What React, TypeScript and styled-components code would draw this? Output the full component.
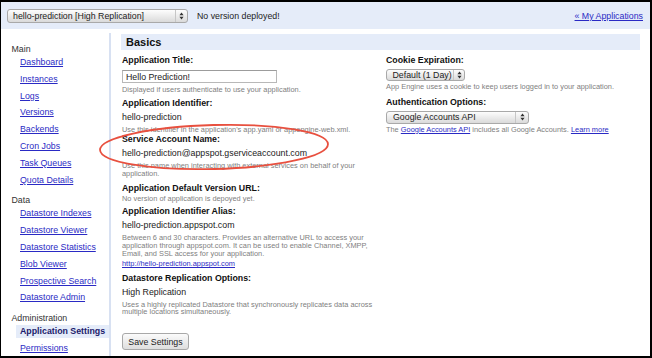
import styled, { createGlobalStyle } from "styled-components"

const GlobalStyle = createGlobalStyle`
  body {
    margin: 0;
    background: #fff;
    font-family: "Liberation Sans", Arial, sans-serif;
  }
`

const LINK = "#2a2ac4"

const Frame = styled.div`
  position: relative;
  box-sizing: border-box;
  width: 652px;
  height: 358px;
  border: 2px solid #000;
  border-left-width: 1px;
  overflow: hidden;
  color: #222;
`

const TopBar = styled.div`
  height: 27px;
  background: #e5ecf9;
  display: flex;
  align-items: center;
  padding: 0 7px 0 6px;
  font-size: 8.8px;
`

const SelectBox = styled.div<{ $width: number; $height: number }>`
  box-sizing: border-box;
  width: ${p => p.$width}px;
  height: ${p => p.$height}px;
  display: flex;
  align-items: center;
  border: 1px solid #a9a9a9;
  border-radius: 3px;
  background: linear-gradient(#fdfdfd, #dadada);
  font-size: 8.8px;
  color: #222;
`

const SelectText = styled.span<{ $pad: number }>`
  flex: 1;
  padding-left: ${p => p.$pad}px;
  white-space: nowrap;
  overflow: hidden;
`

const SelectArrow = styled.span<{ $w: number }>`
  width: ${p => p.$w}px;
  align-self: stretch;
  border-left: 1px solid #c6c6c6;
  display: flex;
  align-items: center;
  justify-content: center;
`

const FieldSelect = styled(SelectBox)`
  margin-top: 2.6px;
`

const NoVersion = styled.span`
  margin-left: 9px;
`

const MyApps = styled.a`
  margin-left: auto;
  color: ${LINK};
  text-decoration: underline;
`

const Body = styled.div`
  display: flex;
  margin-top: 4px;
  height: 323px;
`

const Sidebar = styled.div`
  flex-shrink: 0;
  width: 108px;
  border-right: 2px solid #d8e1f2;
  padding-top: 11px;
  font-size: 8.8px;
`

const NavSection = styled.div`
  & + & {
    margin-top: 7px;
  }
`

const NavTitle = styled.div`
  line-height: 10px;
  padding-left: 10.5px;
  color: #333;
`

const NavLink = styled.a<{ $active?: boolean }>`
  display: block;
  line-height: 16.8px;
  padding-left: 19px;
  color: ${LINK};
  text-decoration: underline;
  white-space: nowrap;

  ${p =>
    p.$active &&
    `
    line-height: 13px;
    margin: 2px 0 2px 15px;
    padding-left: 4px;
    background: #e5ecf9;
    font-weight: bold;
    color: #1b1b6b;
    text-decoration: none;
  `}
`

const Main = styled.div`
  flex: 1;
  padding: 1px 10px 0 10px;
`

const Header = styled.div`
  height: 16px;
  line-height: 16px;
  background: #e5ecf9;
  padding-left: 5px;
  font-size: 11px;
  font-weight: bold;
  color: #111;
`

const Columns = styled.div`
  display: grid;
  grid-template-columns: 264px 1fr;
  margin-top: 5.2px;
  padding-left: 1px;
`

const Column = styled.div`
  display: flex;
  flex-direction: column;
  align-items: flex-start;
`

const Field = styled.div<{ $gap?: number }>`
  margin-top: ${p => p.$gap ?? 0}px;
`

const Label = styled.div`
  font-size: 8.8px;
  line-height: 11px;
  font-weight: bold;
  color: #111;
`

const Value = styled.div`
  font-size: 8.8px;
  line-height: 11px;
  margin-top: 3px;
  color: #222;
`

const Help = styled.div`
  font-size: 7.4px;
  line-height: 7.7px;
  margin-top: 3px;
  color: #808080;
  white-space: nowrap;

  ${Label} + & {
    margin-top: 1px;
  }
  ${FieldSelect} + & {
    margin-top: 1.9px;
  }
`

const HelpLink = styled.a`
  display: block;
  font-size: 7.4px;
  line-height: 7.7px;
  margin-top: 2.8px;
  color: ${LINK};
  text-decoration: underline;
`

const InlineLink = styled.a`
  color: ${LINK};
  text-decoration: underline;
`

const TextInput = styled.input`
  box-sizing: border-box;
  display: block;
  width: 155px;
  height: 13.3px;
  margin: 4px 0 0;
  padding: 0 0 0 3px;
  border: 1px solid #b8b8b8;
  border-top-color: #9c9c9c;
  font: 8.8px "Liberation Sans", Arial, sans-serif;
  color: #222;
  background: #fff;
  outline: none;
`

const SaveButton = styled.button`
  box-sizing: border-box;
  width: 67px;
  height: 17px;
  margin-top: 17px;
  padding: 0;
  border: 1px solid #a8a8a8;
  border-radius: 3px;
  background: linear-gradient(#fbfbfb, #dedede);
  font: 8.8px "Liberation Sans", Arial, sans-serif;
  color: #222;
`

const Annotation = styled.svg`
  position: absolute;
  left: 0;
  top: 0;
  pointer-events: none;
`

function UpDown() {
  return (
    <svg width="5" height="8" viewBox="0 0 5 8">
      <path d="M0.4 3.3 L2.5 0.4 L4.6 3.3 Z M0.4 4.7 L2.5 7.6 L4.6 4.7 Z" fill="#333" />
    </svg>
  )
}

const mainLinks = ["Dashboard", "Instances", "Logs", "Versions", "Backends", "Cron Jobs", "Task Queues", "Quota Details"]
const dataLinks = ["Datastore Indexes", "Datastore Viewer", "Datastore Statistics", "Blob Viewer", "Prospective Search", "Datastore Admin"]

export default function App() {
  return (
    <Frame>
      <GlobalStyle />
      <TopBar>
        <SelectBox $width={181} $height={14}>
          <SelectText $pad={5}>hello-prediction [High Replication]</SelectText>
          <SelectArrow $w={11}><UpDown /></SelectArrow>
        </SelectBox>
        <NoVersion>No version deployed!</NoVersion>
        <MyApps>« My Applications</MyApps>
      </TopBar>
      <Body>
        <Sidebar>
          <NavSection>
            <NavTitle>Main</NavTitle>
            {mainLinks.map(l => <NavLink key={l}>{l}</NavLink>)}
          </NavSection>
          <NavSection>
            <NavTitle>Data</NavTitle>
            {dataLinks.map(l => <NavLink key={l}>{l}</NavLink>)}
          </NavSection>
          <NavSection>
            <NavTitle>Administration</NavTitle>
            <NavLink $active>Application Settings</NavLink>
            <NavLink>Permissions</NavLink>
          </NavSection>
        </Sidebar>
        <Main>
          <Header>Basics</Header>
          <Columns>
            <Column>
              <Field>
                <Label>Application Title:</Label>
                <TextInput value="Hello Prediction!" readOnly />
                <Help>Displayed if users authenticate to use your application.</Help>
              </Field>
              <Field $gap={3.6}>
                <Label>Application Identifier:</Label>
                <Value>hello-prediction</Value>
                <Help>Use this identifier in the application's app.yaml or appengine-web.xml.</Help>
              </Field>
              <Field $gap={1}>
                <Label>Service Account Name:</Label>
                <Value>hello-prediction@appspot.gserviceaccount.com</Value>
                <Help>
                  Use this name when interacting with external services on behalf of your
                  <br />
                  application.
                </Help>
              </Field>
              <Field $gap={5.6}>
                <Label>Application Default Version URL:</Label>
                <Help>No version of application is depoyed yet.</Help>
              </Field>
              <Field $gap={3.3}>
                <Label>Application Identifier Alias:</Label>
                <Value>hello-prediction.appspot.com</Value>
                <Help>
                  Between 6 and 30 characters. Provides an alternative URL to access your
                  <br />
                  application through appspot.com. It can be used to enable Channel, XMPP,
                  <br />
                  Email, and SSL access for your application.
                </Help>
                <HelpLink>http://hello-prediction.appspot.com</HelpLink>
              </Field>
              <Field $gap={4.6}>
                <Label>Datastore Replication Options:</Label>
                <Value>High Replication</Value>
                <Help>
                  Uses a highly replicated Datastore that synchronously replicates data across
                  <br />
                  multiple locations simultaneously.
                </Help>
              </Field>
              <SaveButton>Save Settings</SaveButton>
            </Column>
            <Column>
              <Field>
                <Label>Cookie Expiration:</Label>
                <FieldSelect $width={79} $height={12.5}>
                  <SelectText $pad={5.5}>Default (1 Day)</SelectText>
                  <SelectArrow $w={10}><UpDown /></SelectArrow>
                </FieldSelect>
                <Help>App Engine uses a cookie to keep users logged in to your application.</Help>
              </Field>
              <Field $gap={6.1}>
                <Label>Authentication Options:</Label>
                <FieldSelect $width={143} $height={13.3}>
                  <SelectText $pad={6}>Google Accounts API</SelectText>
                  <SelectArrow $w={12}><UpDown /></SelectArrow>
                </FieldSelect>
                <Help>
                  The <InlineLink>Google Accounts API</InlineLink> includes all Google Accounts.{" "}
                  <InlineLink>Learn more</InlineLink>
                </Help>
              </Field>
            </Column>
          </Columns>
        </Main>
      </Body>
      <Annotation width="650" height="354" viewBox="0 0 650 354">
        <ellipse
          cx="213"
          cy="145"
          rx="114"
          ry="22"
          transform="rotate(-1.5 213 145)"
          fill="none"
          stroke="#e8503f"
          strokeWidth="1.8"
        />
      </Annotation>
    </Frame>
  )
}
